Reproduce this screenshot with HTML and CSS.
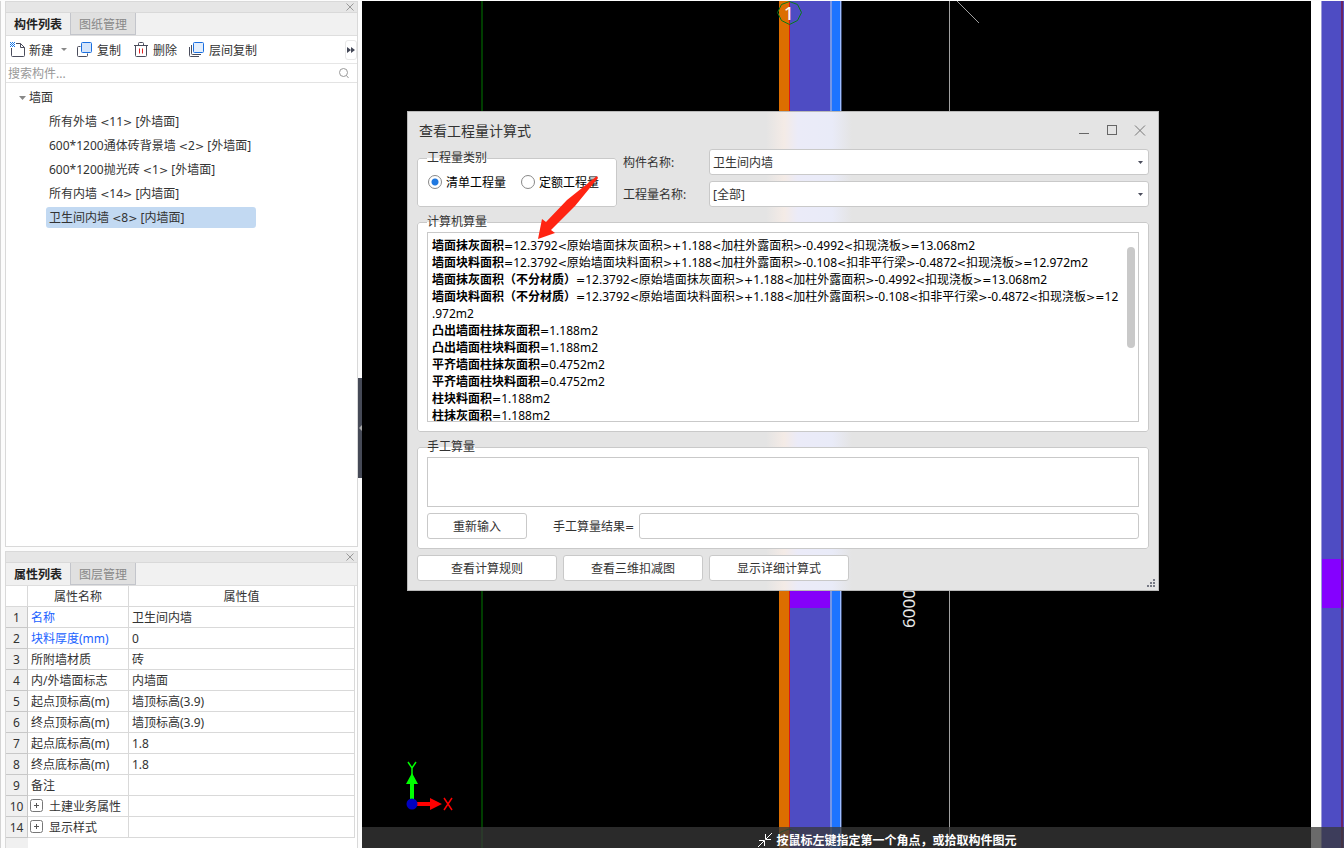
FILE: index.html
```html
<!DOCTYPE html>
<html lang="zh-CN">
<head>
<meta charset="utf-8">
<title>查看工程量计算式</title>
<link rel="stylesheet" href="styles.css">
</head>
<body>
<aside class="sidebar">
  <section class="panel panel-grow">
    <div class="panel-bar"><button class="bar-close" aria-label="关闭"><svg width="8" height="8"><path d="M.5 .5l7 7M7.5 .5l-7 7" stroke="#999" fill="none"/></svg></button></div>
    <div class="tabs">
      <button class="tab active">构件列表</button><button class="tab">图纸管理</button>
    </div>
    <div class="toolbar">
      <button class="tool tool-new">
        <svg width="16" height="16" fill="none"><path d="M1.500 6v7.500q0 1 1 1h11q1 0 1-1V5.500l-4-4H6M10.500 1.500v4h4" stroke="#4a4d5c"/><path d="M0 0h1v1H0zM2 0h1v1H2zM4 0h1v1H4zM1 1h1v1H1zM3 1h1v1H3zM0 2h1v1H0zM2 2h1v1H2zM4 2h1v1H4zM1 3h1v1H1zM3 3h1v1H3zM0 4h1v1H0zM2 4h1v1H2zM4 4h1v1H4z" fill="#1677e8"/></svg>
        <span>新建</span>
        <svg class="caret" width="6" height="3"><path d="M0 0h6L3 3z" fill="#888"/></svg>
      </button>
      <button class="tool tool-copy">
        <svg width="16" height="16" fill="none"><path d="M3.500 4.500h-2q-1 0-1 1v8q0 1 1 1h8q1 0 1-1v-2" stroke="#4a4d5c"/><rect x="4.500" y=".5" width="10" height="10" rx="1" fill="#d5e5fb" stroke="#1a6fe0"/></svg>
        <span>复制</span>
      </button>
      <button class="tool tool-delete">
        <svg width="14" height="16" fill="none"><path d="M0 3.500h14M4.500 3V1.500q0-1 1-1h3q1 0 1 1V3M1.500 4v9.500q0 1 1 1h9q1 0 1-1V4" stroke="#4a4d5c"/><path d="M5.500 6.500v5M8.500 6.500v5" stroke="#e02020"/></svg>
        <span>删除</span>
      </button>
      <button class="tool tool-layer">
        <svg width="16" height="16" fill="none"><path d="M.5 5v8.500q0 1 1 1H10M2.500 3v8.500q0 1 1 1H12" stroke="#4a4d5c"/><rect x="4.500" y=".5" width="10" height="10" rx="1" fill="#e3eefc" stroke="#1a6fe0"/></svg>
        <span>层间复制</span>
      </button>
      <button class="more" aria-label="更多"><svg width="8" height="6"><path d="M0 0l4 3-4 3zM4 0l4 3-4 3z" fill="#444857"/></svg></button>
    </div>
    <label class="search">
      <input type="text" placeholder="搜索构件..." aria-label="搜索构件">
      <svg width="12" height="12" fill="none" stroke="#999"><circle cx="5.500" cy="5.500" r="4"/><path d="M8.500 8.500l2 2.500"/></svg>
    </label>
    <ul class="tree">
      <li class="root"><svg width="7" height="4"><path d="M0 0h7L3.500 4z" fill="#888"/></svg>墙面</li>
      <li><span class="leaf">所有外墙 <i>&lt;</i>11<i>&gt;</i> [外墙面]</span></li>
      <li><span class="leaf">600*1200通体砖背景墙 <i>&lt;</i>2<i>&gt;</i> [外墙面]</span></li>
      <li><span class="leaf">600*1200抛光砖 <i>&lt;</i>1<i>&gt;</i> [外墙面]</span></li>
      <li><span class="leaf">所有内墙 <i>&lt;</i>14<i>&gt;</i> [内墙面]</span></li>
      <li><span class="leaf selected">卫生间内墙 <i>&lt;</i>8<i>&gt;</i> [内墙面]</span></li>
    </ul>
  </section>
  <section class="panel">
    <div class="panel-bar"><button class="bar-close" aria-label="关闭"><svg width="8" height="8"><path d="M.5 .5l7 7M7.500 .5l-7 7" stroke="#999" fill="none"/></svg></button></div>
    <div class="tabs">
      <button class="tab active">属性列表</button><button class="tab">图层管理</button>
    </div>
    <div class="props-wrap">
      <table class="props">
        <thead><tr><th></th><th>属性名称</th><th>属性值</th></tr></thead>
        <tbody>
          <tr><th>1</th><td class="key">名称</td><td>卫生间内墙</td></tr>
          <tr><th>2</th><td class="key">块料厚度(mm)</td><td>0</td></tr>
          <tr><th>3</th><td>所附墙材质</td><td>砖</td></tr>
          <tr><th>4</th><td>内/外墙面标志</td><td>内墙面</td></tr>
          <tr><th>5</th><td>起点顶标高(m)</td><td>墙顶标高(3.9)</td></tr>
          <tr><th>6</th><td>终点顶标高(m)</td><td>墙顶标高(3.9)</td></tr>
          <tr><th>7</th><td>起点底标高(m)</td><td>1.8</td></tr>
          <tr><th>8</th><td>终点底标高(m)</td><td>1.8</td></tr>
          <tr><th>9</th><td>备注</td><td></td></tr>
          <tr><th>10</th><td><div class="group"><button class="expand" aria-label="展开"><svg width="13" height="13" fill="none"><rect x=".5" y=".5" width="12" height="12" rx="2" stroke="#777"/><path d="M4 6.500h5M6.500 4v5" stroke="#555"/></svg></button>土建业务属性</div></td><td></td></tr>
          <tr><th>14</th><td><div class="group"><button class="expand" aria-label="展开"><svg width="13" height="13" fill="none"><rect x=".5" y=".5" width="12" height="12" rx="2" stroke="#777"/><path d="M4 6.500h5M6.500 4v5" stroke="#555"/></svg></button>显示样式</div></td><td></td></tr>
        </tbody>
      </table>
    </div>
  </section>
  <button class="collapse" aria-label="折叠"><svg width="3" height="6"><path d="M3 0v6L0 3z" fill="#aaa"/></svg></button>
</aside>

<main class="viewport">
  <svg class="drawing" width="100%" height="100%">
    <g transform="translate(-362 -1)">
      <rect x="481" y="1" width="2" height="2000" fill="#003d00"/>
      <rect x="779" y="1" width="10" height="2000" fill="#dc6e00"/>
      <rect x="789" y="1" width="1" height="2000" fill="#d8141c"/>
      <rect x="790" y="1" width="40" height="2000" fill="#4e4cc3"/>
      <rect x="790" y="540" width="40" height="68" fill="#8500fa"/>
      <rect x="830" y="1" width="2" height="2000" fill="#7696e4"/>
      <rect x="832" y="1" width="8" height="2000" fill="#1c74ff"/>
      <rect x="840" y="1" width="1" height="2000" fill="#9dbcff"/>
      <rect x="841" y="1" width="1" height="2000" fill="#3a4a70"/>
      <rect x="949" y="1" width="1" height="2000" fill="#a0a0a0"/>
      <path d="M957 1l22 22" stroke="#a0a0a0"/>
      <path d="M789.500 1.500l8 3 4 8-4 8-8 4-8-4-4-8 4-8z" fill="none" stroke="#087a18"/>
      <text class="axis-no" x="789" y="20" text-anchor="middle">1</text>
      <path d="M777 838l4-6 8-3 8 3 4 6" fill="none" stroke="#087a18"/>
      <text class="dimension" transform="translate(915 628) rotate(-90)">6000</text>
      <rect x="1311" y="1" width="10" height="2000" fill="#fff"/>
      <rect x="1321" y="1" width="1" height="2000" fill="#9a9ad8"/>
      <rect x="1322" y="1" width="2000" height="2000" fill="#4e4cc3"/>
      <rect x="1322" y="559" width="2000" height="49" fill="#8500ff"/>
      <rect x="1341" y="1" width="2" height="2000" fill="#6c2464"/>
      <path d="M410 800v-16h-4l6-11 6 11h-4v16z" fill="#0f0"/>
      <path d="M416 802h14v-4l12 6-12 6v-4h-14z" fill="red"/>
      <circle cx="412" cy="804" r="5.500" fill="#0000c0"/>
      <path d="M408 762l4 6 4-6M412 768v7" fill="none" stroke="#0f0" stroke-width="1.500"/>
      <path d="M444 798l8 12M452 798l-8 12" stroke="red" stroke-width="1.500"/>
    </g>
  </svg>

  <form class="dialog">
    <header class="dialog-head">
      <h1>查看工程量计算式</h1>
      <div class="window-buttons">
        <button type="button" aria-label="最小化"><svg width="12" height="12"><path d="M1 8.500h10" stroke="#666"/></svg></button>
        <button type="button" aria-label="最大化"><svg width="12" height="12"><rect x="1.500" y=".5" width="9" height="9" fill="none" stroke="#666"/></svg></button>
        <button type="button" aria-label="关闭"><svg width="12" height="12"><path d="M1 .5l10 10M11 .5l-10 10" stroke="#777"/></svg></button>
      </div>
    </header>
    <div class="filters">
      <fieldset class="kind">
        <legend>工程量类别</legend>
        <div class="radios">
          <label><input type="radio" name="kind" checked><span>清单工程量</span></label>
          <label><input type="radio" name="kind"><span>定额工程量</span></label>
        </div>
      </fieldset>
      <div class="fields">
        <label for="component">构件名称:</label>
        <div class="combo"><select id="component"><option>卫生间内墙</option></select><svg width="5" height="3"><path d="M0 0h5L2.500 3z" fill="#4a4d5c"/></svg></div>
        <label for="quantity">工程量名称:</label>
        <div class="combo"><select id="quantity"><option>[全部]</option></select><svg width="5" height="3"><path d="M0 0h5L2.500 3z" fill="#4a4d5c"/></svg></div>
      </div>
    </div>
    <fieldset class="group-box">
      <legend>计算机算量</legend>
      <div class="result">
        <p><b>墙面抹灰面积</b><i>=</i>12.3792<i>&lt;</i>原始墙面抹灰面积<i>&gt;+</i>1.188<i>&lt;</i>加柱外露面积<i>&gt;</i>-0.4992<i>&lt;</i>扣现浇板<i>&gt;=</i>13.068m2</p>
        <p><b>墙面块料面积</b><i>=</i>12.3792<i>&lt;</i>原始墙面块料面积<i>&gt;+</i>1.188<i>&lt;</i>加柱外露面积<i>&gt;</i>-0.108<i>&lt;</i>扣非平行梁<i>&gt;</i>-0.4872<i>&lt;</i>扣现浇板<i>&gt;=</i>12.972m2</p>
        <p><b>墙面抹灰面积（不分材质）</b><i>=</i>12.3792<i>&lt;</i>原始墙面抹灰面积<i>&gt;+</i>1.188<i>&lt;</i>加柱外露面积<i>&gt;</i>-0.4992<i>&lt;</i>扣现浇板<i>&gt;=</i>13.068m2</p>
        <p><b>墙面块料面积（不分材质）</b><i>=</i>12.3792<i>&lt;</i>原始墙面块料面积<i>&gt;+</i>1.188<i>&lt;</i>加柱外露面积<i>&gt;</i>-0.108<i>&lt;</i>扣非平行梁<i>&gt;</i>-0.4872<i>&lt;</i>扣现浇板<i>&gt;=</i>12.972m2</p>
        <p><b>凸出墙面柱抹灰面积</b><i>=</i>1.188m2</p>
        <p><b>凸出墙面柱块料面积</b><i>=</i>1.188m2</p>
        <p><b>平齐墙面柱抹灰面积</b><i>=</i>0.4752m2</p>
        <p><b>平齐墙面柱块料面积</b><i>=</i>0.4752m2</p>
        <p><b>柱块料面积</b><i>=</i>1.188m2</p>
        <p><b>柱抹灰面积</b><i>=</i>1.188m2</p>
        <span class="thumb"></span>
      </div>
    </fieldset>
    <fieldset class="group-box">
      <legend>手工算量</legend>
      <textarea class="manual" aria-label="手工算量"></textarea>
      <div class="manual-row">
        <button type="button" class="btn btn-small">重新输入</button>
        <label for="manual-result">手工算量结果<i>=</i></label>
        <input id="manual-result" type="text">
      </div>
    </fieldset>
    <div class="actions">
      <button type="button" class="btn">查看计算规则</button>
      <button type="button" class="btn">查看三维扣减图</button>
      <button type="button" class="btn">显示详细计算式</button>
    </div>
    <svg class="grip" width="8" height="8"><path d="M6 0h2v2H6zM3 3h2v2H3zM6 3h2v2H6zM0 6h2v2H0zM3 6h2v2H3zM6 6h2v2H6z" fill="#777a85"/></svg>
    <svg class="pointer" width="64" height="66"><path d="M61 1L31 25 10 47 6 44 2 64l17-6-4-3 24-24L62 3z" fill="#ff2412"/></svg>
  </form>

  <footer class="hint">
    <svg width="16" height="16" fill="none" stroke="#fff"><path d="M15 1L9 7M8.500 2v5.500H14M1 15l6-6M2 8.500h5.500V14"/></svg>
    <span>按鼠标左键指定第一个角点，或拾取构件图元</span>
  </footer>
</main>
</body>
</html>
```

FILE: styles.css
```css
* {
  box-sizing: border-box;
}

body {
  margin: 0;
  height: 100vh;
  display: flex;
  overflow: hidden;
  padding-top: 1px;
  background: #fcfcfc;
  color: #333;
  font: 12px/16px "Noto Sans", "Noto Sans CJK SC", sans-serif;
}

button,
input,
select,
textarea {
  font: inherit;
  color: inherit;
  margin: 0;
}

button {
  border: 0;
  padding: 0;
  background: none;
}

svg {
  display: block;
  flex: none;
}

/* Operators */
i {
  font: 11px/1 "DejaVu Sans", sans-serif;
}

/* Sidebar */
.sidebar {
  position: relative;
  flex: none;
  width: 362px;
  padding: 0 4px 0 4px;
  border-left: 1px solid #d4d4d4;
  display: flex;
  flex-direction: column;
  gap: 4px;
}

.panel {
  flex: none;
  border: 1px solid #d9d9d9;
  background: #fff;
}

.panel:last-of-type {
  border-bottom: 0;
}

.panel-grow {
  flex: 1;
}

.panel-bar {
  height: 11px;
  display: flex;
  align-items: center;
  justify-content: flex-end;
  padding-right: 3px;
  background: #e6e6e6;
  border-bottom: 1px solid #d9d9d9;
}

.tabs {
  height: 23px;
  display: flex;
  background: #f1f1f1;
  border-bottom: 1px solid #dedede;
}

.tab {
  width: 65px;
  padding-top: 2px;
  background: #e0e0e0;
  color: #888;
  border-right: 1px solid #c3c5cb;
  border-bottom: 1px solid #c3c5cb;
}

.tab.active {
  background: #f0f0f0;
  color: #222;
  font-weight: bold;
  border-bottom: 0;
}

.toolbar {
  height: 28px;
  display: flex;
  align-items: center;
  padding-left: 4px;
  border-bottom: 1px solid #e6e6e6;
}

.tool {
  display: flex;
  align-items: center;
  gap: 4px;
}

.tool span {
  padding-top: 2px;
}

.tool-new {
  gap: 3px;
  margin-right: 10px;
}

.caret {
  margin-left: 5px;
}

.tool-copy {
  margin-right: 13px;
}

.tool-delete {
  gap: 5px;
  margin-right: 12px;
}

.more {
  width: 12px;
  height: 20px;
  margin-left: auto;
  padding-left: 1px;
  border: 1px solid #e8e8e8;
  border-radius: 3px;
}

.search {
  height: 19px;
  display: flex;
  align-items: center;
  padding: 0 7px 0 2px;
  border-bottom: 1px solid #e3e3e3;
}

.search input {
  flex: 1;
  border: 0;
  padding: 0;
  height: 18px;
  background: none;
}

.search input::placeholder {
  color: #999;
}

.tree {
  list-style: none;
  margin: 0;
  padding: 3px 0 0 40px;
}

.tree li {
  height: 24px;
  display: flex;
  align-items: flex-start;
  padding-top: 1px;
}

.tree .root {
  align-items: center;
  padding-top: 0;
  margin-left: -27px;
  gap: 3px;
}

.leaf {
  width: 210px;
  height: 21px;
  padding-left: 3px;
  line-height: 21px;
  border-radius: 3px;
  white-space: nowrap;
}

.leaf.selected {
  background: #c2d9f2;
}

.props-wrap {
  padding: 0 2px 10px 0;
  background: linear-gradient(90deg, #f0f0f0 22px, #fff 22px);
}

.props {
  width: 100%;
  table-layout: fixed;
  border-spacing: 0;
  background: #fff;
}

.props th,
.props td {
  height: 21px;
  padding: 2px 0 0 3px;
  border-right: 1px solid #d9d9d9;
  border-bottom: 1px solid #d9d9d9;
  font-weight: normal;
  white-space: nowrap;
  line-height: 18px;
}

.props th {
  padding-left: 0;
}

.props th:first-child {
  width: 22px;
}

.props th:nth-child(2) {
  width: 101px;
}

.props tbody th {
  background: #f0f0f0;
  border-color: #c8c8c8;
}

.props .key {
  color: #1a62ff;
}

.group {
  display: flex;
  align-items: center;
  gap: 6px;
  margin-left: -1px;
}

.expand {
  padding-bottom: 3px;
}

.collapse {
  position: absolute;
  right: 0;
  top: 377px;
  width: 4px;
  height: 100px;
  padding-left: 1px;
  background: #464a57;
}

/* Drawing area */
.viewport {
  position: relative;
  flex: 1;
  min-width: 0;
  overflow: hidden;
  background: #000;
}

.drawing {
  position: absolute;
  inset: 0;
}

.axis-no {
  font-size: 18px;
  fill: #fff;
}

.dimension {
  font-size: 17px;
  fill: #e8e8e8;
}

.hint {
  position: absolute;
  left: 0;
  right: 0;
  bottom: 0;
  height: 21px;
  overflow: hidden;
  display: flex;
  justify-content: center;
  gap: 3px;
  padding: 5px 0 0 68px;
  background: rgba(56, 56, 56, .75);
  color: #fff;
  font-weight: bold;
}

.hint span {
  padding-top: 1px;
}

/* Dialog */
.dialog {
  position: absolute;
  left: 45px;
  top: 110px;
  width: 752px;
  padding: 0 9px 9px;
  border: 1px solid #b9b9b9;
  background: linear-gradient(90deg, #e4e4e4 358px, #f4ebe6 376px, #ebebf8 390px, #e9ebf8 424px, #e4e4e4 444px);
}

.dialog-head {
  height: 37px;
  display: flex;
  align-items: center;
  justify-content: space-between;
}

.dialog-head h1 {
  margin: 0 0 0 2px;
  font-size: 14px;
  font-weight: normal;
  line-height: 20px;
}

.window-buttons {
  display: flex;
  gap: 10px;
}

.window-buttons button {
  width: 18px;
  padding-left: 3px;
}

.filters {
  display: flex;
  gap: 6px;
}

fieldset {
  margin: 0;
  min-width: 0;
  padding: 2px 9px 9px;
  border: 1px solid #c9c9c9;
  border-radius: 3px;
  background: #fff;
}

legend {
  padding: 0;
  line-height: 16px;
}

.kind {
  width: 200px;
  margin-top: 1px;
}

.radios {
  display: flex;
  gap: 15px;
  padding: 5px 0 0 1px;
  color: #000;
}

.radios label {
  display: flex;
  align-items: center;
  gap: 4px;
}

.radios span {
  padding-top: 2px;
}

input[type="radio"] {
  appearance: none;
  width: 14px;
  height: 14px;
  border: 1px solid #888;
  border-radius: 50%;
  background: #fff;
}

input[type="radio"]:checked {
  background: radial-gradient(circle, #1f78e0 3px, #fff 4px);
}

.fields {
  flex: 1;
  display: grid;
  grid-template-columns: 80px 1fr;
  gap: 6px;
  align-items: center;
}

.fields label {
  padding-top: 2px;
}

.combo {
  position: relative;
}

.combo select {
  display: block;
  appearance: none;
  width: 100%;
  height: 26px;
  padding: 2px 3px 0;
  border: 1px solid #c9c9c9;
  border-radius: 3px;
  background: #fff;
}

.combo svg {
  position: absolute;
  right: 6px;
  top: 12px;
}

.group-box {
  margin-top: 7px;
}

.result {
  position: relative;
  height: 190px;
  overflow: hidden;
  padding: 4px 18px 0 4px;
  border: 1px solid #c9c9c9;
  color: #000;
  line-height: 17px;
  line-break: anywhere;
}

.result p {
  margin: 0;
}

.thumb {
  position: absolute;
  right: 3px;
  top: 14px;
  width: 8px;
  height: 101px;
  border-radius: 4px;
  background: #c9c9c9;
}

.manual {
  display: block;
  width: 100%;
  height: 50px;
  border: 1px solid #c9c9c9;
  border-radius: 0;
  background: #fff;
  resize: none;
}

.manual-row {
  display: flex;
  align-items: center;
  margin-top: 6px;
}

.manual-row label {
  margin: 0 5px 0 26px;
  padding-top: 2px;
}

.manual-row input {
  flex: 1;
  height: 26px;
  padding: 0 4px;
  border: 1px solid #c9c9c9;
  border-radius: 3px;
}

.btn {
  width: 140px;
  height: 26px;
  padding-top: 2px;
  border: 1px solid #c9c9c9;
  border-radius: 3px;
  background: #fff;
}

.btn-small {
  width: 100px;
}

.actions {
  display: flex;
  gap: 6px;
  margin-top: 6px;
}

.grip {
  position: absolute;
  right: 3px;
  bottom: 3px;
}

.pointer {
  position: absolute;
  left: 128px;
  top: 63px;
}
```
